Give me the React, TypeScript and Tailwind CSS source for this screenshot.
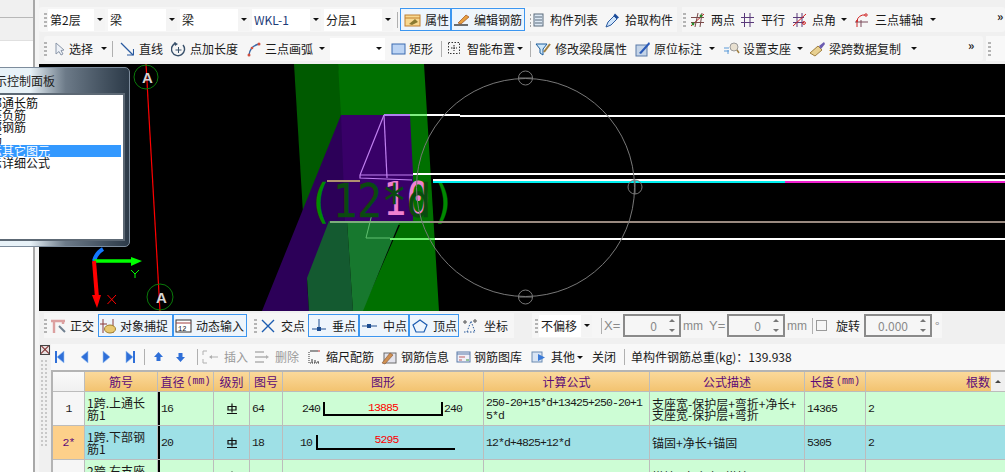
import React from "react";

const Ic = ({ w = 16, children }: { w?: number; children: React.ReactNode }) => (
  <svg width={w} height={16} viewBox={`0 0 ${w} 16`} className="shrink-0" fill="none">
    {children}
  </svg>
);

const Arrow = () => <span className="block w-0 h-0 shrink-0 border-x-[3px] border-x-transparent border-t-[3px] border-t-[#111]" />;

const Grip = ({ cls = "" }: { cls?: string }) => (
  <span className={`flex flex-col gap-[2px] w-[3px] shrink-0 ${cls}`}>
    {[0, 1, 2, 3].map((i) => (
      <span key={i} className="w-[3px] h-[2px] bg-[#b4b4b4]" />
    ))}
  </span>
);

const Sep = ({ cls = "" }: { cls?: string }) => <span className={`w-px h-[16px] bg-[#b0b0b0] shrink-0 ${cls}`} />;

const Combo = ({ text, cls }: { text: string; cls: string }) => (
  <span className={`h-[22px] bg-white flex items-center justify-between shrink-0 pl-[2px] ${cls}`}>
    <span className={text === "WKL-1" ? "text-[#1c3c78]" : ""}>{text}</span>
    <span className="w-[11px] h-full bg-[#f4f4f4] flex items-center justify-center"><Arrow /></span>
  </span>
);

const Tool = ({
  icon,
  label,
  cls,
  active,
  arrow,
  dim,
  lm = "ml-[3px]",
}: {
  icon?: React.ReactNode;
  label: string;
  cls: string;
  active?: boolean;
  arrow?: boolean;
  dim?: boolean;
  lm?: string;
}) => (
  <span
    className={`flex items-center h-[23px] shrink-0 whitespace-nowrap ${cls} ${
      active ? "border border-[#3c96f0] bg-[#eef5fc]" : ""
    } ${dim ? "text-[#9a9a9a]" : ""}`}
  >
    {icon}
    <span className={lm}>{label}</span>
    {arrow && <span className="ml-auto flex items-center"><Arrow /></span>}
  </span>
);

const Spin = ({ value, cls }: { value: string; cls: string }) => (
  <span className={`h-[23px] border-2 border-[#8a8a8a] bg-[#f6f6f6] flex items-center justify-end shrink-0 text-[#8a8a8a] ${cls}`}>
    <span>{value}</span>
    <span className="w-[14px] h-full flex flex-col items-center justify-center gap-[7px] ml-[8px]">
      <span className="block w-0 h-0 border-x-[3px] border-x-transparent border-b-[3px] border-b-[#777]" />
      <span className="block w-0 h-0 border-x-[3px] border-x-transparent border-t-[3px] border-t-[#777]" />
    </span>
  </span>
);

const NavTri = ({ dir, bar }: { dir: "l" | "r"; bar?: boolean }) => (
  <Ic w={12}>
    {dir === "l" ? (
      <path d="M10 2 L10 14 L3 8 Z" fill="#2f6fd8" stroke="#9cc4f4" strokeWidth="0.6" />
    ) : (
      <path d="M2 2 L2 14 L9 8 Z" fill="#2f6fd8" stroke="#9cc4f4" strokeWidth="0.6" />
    )}
    {bar && <rect x={dir === "l" ? 1 : 9} y="2" width="2" height="12" fill="#2f6fd8" />}
  </Ic>
);

const Canvas = () => (
  <svg viewBox="39 64 966 247" width={966} height={247} className="block shrink-0 bg-black">
    <polygon points="294,64 338,64 345,115 303,213" fill="#005a00" />
    <polygon points="338,64 424,64 439,311 362,311 400,225 345,221 341,115" fill="#007000" />
    <polygon points="341,115 356,115 345,221 307,281 309,311 262,311" fill="#2c0058" />
    <polygon points="341,115 410,115 413,173 413,221 345,221" fill="#380068" />
    <polygon points="329,221 307,278 309,311 353,311 347,221" fill="#145a30" />
    <polygon points="347,221 353,311 363,311 400,221" fill="#17782e" />
    <polygon points="413,173 430,173 433,221 413,221" fill="#007000" />
    <g stroke="#c080f0" strokeWidth="1.2" fill="none">
      <path d="M384 115 L360 175 L360 178 L412 180" />
      <path d="M384 115 L387 178" />
      <path d="M360 175 H413" />
    </g>
    <path d="M372 214 L366 238 L390 238" stroke="#60c070" strokeWidth="1" fill="none" />
    <text x="383" y="215" fontFamily="'DejaVu Sans Mono', monospace" fontSize="46" textLength="47" lengthAdjust="spacingAndGlyphs" fill="#f080d0">10</text>
    <text x="308" y="217" fontFamily="'DejaVu Sans Mono', monospace" fontSize="46" textLength="148" lengthAdjust="spacingAndGlyphs" fill="#0a4a10" stroke="#0a4a10" strokeWidth="0.3">
      <tspan fill="#008a00" stroke="#008a00">(</tspan>12*d<tspan fill="#008a00" stroke="#008a00">)</tspan>
    </text>
    <g strokeWidth="2" shapeRendering="crispEdges">
      <path d="M384 115 H410" stroke="#b080f0" />
      <path d="M410 115 H427" stroke="#80f080" />
      <path d="M427 115 H460" stroke="#fff" />
      <path d="M460 116 H1005" stroke="#fff" />
      <path d="M413 174 H1005" stroke="#fff" />
      <path d="M433 180 H1005" stroke="#fff" />
      <path d="M433 182 H785" stroke="#00f0f0" />
      <path d="M785 182 H1005" stroke="#f020d0" />
      <path d="M327 181 H360" stroke="#b09070" />
      <path d="M330 222 H430" stroke="#7cae7c" />
      <path d="M430 222 H1005" stroke="#9a8a80" />
      <path d="M390 239 H435" stroke="#70f070" />
      <path d="M435 239 H1005" stroke="#fff" />
    </g>
    <g stroke="#787878" strokeWidth="1" fill="none">
      <circle cx="525.5" cy="187.5" r="109" />
      <circle cx="525.5" cy="78" r="7" />
      <path d="M518.5 78 H532.5" />
      <circle cx="635" cy="187" r="7" />
      <path d="M635 180 V194" />
      <circle cx="525.5" cy="297" r="7" />
      <path d="M518.5 297 H532.5" />
    </g>
    <path d="M146 64 L160 311" stroke="#ff0000" strokeWidth="1.2" />
    <circle cx="146" cy="77" r="12" stroke="#0a7a0a" strokeWidth="1" fill="none" />
    <circle cx="160" cy="297" r="13" stroke="#0a7a0a" strokeWidth="1" fill="none" />
    <text x="147.5" y="83" textAnchor="middle" fontFamily="'Liberation Sans', sans-serif" fontWeight="700" fontSize="15" fill="#d4d4d4">A</text>
    <text x="161.5" y="303" textAnchor="middle" fontFamily="'Liberation Sans', sans-serif" fontWeight="700" fontSize="15" fill="#d4d4d4">A</text>
    <path d="M94 261 Q96 253 103 249" stroke="#1478ff" strokeWidth="4" fill="none" />
    <path d="M94 261 H134" stroke="#00ff00" strokeWidth="3.4" />
    <polygon points="131,257 142,261 131,266" fill="#00ff00" />
    <path d="M94 261 L97 298" stroke="#ff0000" strokeWidth="4" />
    <polygon points="92,295 101,295 97,308" fill="#ff0000" />
    <path d="M131 270 L135 274 L139 270 M135 274 V278" stroke="#00ff00" strokeWidth="1" fill="none" />
    <path d="M107.5 295 L116 304 M116 295 L107.5 304" stroke="#ff0000" strokeWidth="1" />
  </svg>
);

const Head = ({ t, mm }: { t: string; mm?: boolean }) => (
  <>
    {t}
    {mm && <span className="font-['Liberation_Mono',monospace] text-[10px] ml-[2px]">(mm)</span>}
  </>
);

const headers: [string, string, boolean][] = [
  ["筋号", "w-[73px]", false],
  ["直径", "w-[56px]", true],
  ["级别", "w-[36px]", false],
  ["图号", "w-[33px]", false],
  ["图形", "w-[201px]", false],
  ["计算公式", "w-[166px]", false],
  ["公式描述", "w-[155px]", false],
  ["长度", "w-[61px]", true],
];

const mono = "font-['Liberation_Mono',monospace] text-[11.5px] tracking-[-0.9px]";
const cell = "shrink-0 h-full border-r border-[#bcbcbc] flex items-center overflow-hidden";

const Steel = () => (
  <svg width={12} height={12} viewBox="0 0 12 12" className="mx-auto" fill="none">
    <path d="M2 7 V3.5 H10 V7 Z M6 0.5 V9.5 M1 10.5 H11" stroke="#111" strokeWidth="1.2" />
  </svg>
);

const Row = ({
  bg,
  head,
  headBg,
  name,
  d,
  no,
  shape,
  f,
  desc,
  len,
  n,
}: {
  bg: string;
  head: string;
  headBg: string;
  name: React.ReactNode;
  d: string;
  no: string;
  shape: React.ReactNode;
  f: string;
  desc: React.ReactNode;
  len: string;
  n: string;
}) => (
  <div className={`flex shrink-0 border-b border-[#bcbcbc] h-[34px] ${bg}`}>
    <div className={`${cell} w-[32px] justify-center ${headBg} ${mono}`}>{head}</div>
    <div className={`${cell} w-[73px] pl-[2px] leading-[12px]`}><span>{name}</span></div>
    <div className={`${cell} w-[56px] border-l-2 border-l-black pl-[1px] ${mono}`}>{d}</div>
    <div className={`${cell} w-[36px]`}><Steel /></div>
    <div className={`${cell} w-[33px] pl-[2px] ${mono}`}>{no}</div>
    <div className={`${cell} w-[201px]`}>{shape}</div>
    <div className={`${cell} w-[166px] pl-[2px] pr-[5px] leading-[13px] break-all ${mono}`}><span>{f}</span></div>
    <div className={`${cell} w-[155px] pl-[2px] leading-[11px] whitespace-nowrap`}><span>{desc}</span></div>
    <div className={`${cell} w-[61px] pl-[2px] ${mono}`}>{len}</div>
    <div className={`shrink-0 h-full w-[125px] flex items-center pl-[2px] ${mono}`}>{n}</div>
  </div>
);

export default function App() {
  return (
    <div className="relative w-[1005px] h-[472px] overflow-hidden flex bg-[#f0f0f0] text-[12px] text-[#1a1a1a] font-['Noto_Sans_CJK_SC','Liberation_Sans',sans-serif] leading-none">
      {/* left strip */}
      <div className="w-[33px] h-full shrink-0 flex flex-col">
        <div className="h-[18px] bg-[#f0f0f0] border-b border-[#b8b8b8]" />
        <div className="h-[23px] bg-[#f0f0f0] border-b border-[#e0e0e0]" />
        <div className="flex-1 bg-white" />
      </div>
      <div className="w-[2px] h-full bg-[#a8a8a8] shrink-0" />
      <div className="w-[4px] h-full bg-[#f4f4f4] shrink-0" />

      {/* main */}
      <div className="w-[966px] h-full shrink-0 flex flex-col">
        <div className="h-[7px] shrink-0" />

        {/* row 1 */}
        <div className="h-[25px] flex items-center shrink-0 bg-[#f6f6f6] pl-[5px] rounded-[3px]">
          <Grip />
          <Combo text="第2层" cls="w-[57px] ml-[1px]" />
          <Combo text="梁" cls="w-[69px] ml-[3px]" />
          <Combo text="梁" cls="w-[69px] ml-[3px]" />
          <Combo text="WKL-1" cls="w-[69px] ml-[3px]" />
          <Combo text="分层1" cls="w-[69px] ml-[3px]" />
          <Sep cls="ml-[4px]" />
          <Tool active cls="w-[51px] ml-[2px] pl-[3px]" label="属性" icon={
            <Ic w={18}><rect x="1" y="3" width="15" height="11" fill="#f8d890" stroke="#c08030" /><path d="M1 6 H16" stroke="#c08030" /><path d="M5 12 L11 7 L14 10 L8 13 Z" fill="#8a7a30" /></Ic>
          } />
          <Tool active cls="w-[74px] pl-[1px]" label="编辑钢筋" icon={
            <Ic w={18}><path d="M1 13 H15" stroke="#333" strokeWidth="1.4" /><path d="M5 11 L13 3 L16 5 L8 12 Z" fill="#e8a040" stroke="#a05020" strokeWidth="0.7" /></Ic>
          } />
          <Tool cls="w-[70px] ml-[4px]" lm="ml-[6px]" label="构件列表" icon={
            <Ic w={15}><path d="M1 3 H3 M1 7 H3 M1 11 H3 M1 14 H3" stroke="#555" strokeDasharray="1 1" /><rect x="5" y="2" width="9" height="12" fill="#dce8f4" stroke="#5a6a7a" /><path d="M6 5 H13 M6 8 H13 M6 11 H13" stroke="#5a6a7a" /></Ic>
          } />
          <Tool cls="w-[69px] ml-[6px]" lm="ml-[5px]" label="拾取构件" icon={
            <Ic w={15}><path d="M1 15 L3 10 L9 4 L12 7 L6 13 Z" fill="#cfe4fa" stroke="#2a5aa0" /><path d="M10 1.5 L14 5.5 L12 7 L8.5 3.5 Z" fill="#1c4c9a" /></Ic>
          } />
          <span className="w-[5px] self-stretch bg-[#f0f0f0] ml-[3px] shrink-0" />
          <Grip cls="ml-[1px]" />
          <Tool cls="w-[43px] ml-[4px]" lm="ml-[6px]" label="两点" icon={
            <Ic w={15}><path d="M1 14 L14 2" stroke="#c02020" /><path d="M1 5.5 H14 M1 10.5 H14 M5 15 L8 1 M10 15 L12 1" stroke="#7a4a4a" /><circle cx="3" cy="12" r="1.4" fill="#2a8a2a" /><circle cx="11" cy="4" r="1.4" fill="#2a8a2a" /></Ic>
          } />
          <Tool cls="w-[45px] ml-[7px]" lm="ml-[6px]" label="平行" icon={
            <Ic w={15}><path d="M1 5.5 H14 M1 10.5 H14 M4.5 1 V15 M10 1 V15" stroke="#5a3a7a" /></Ic>
          } />
          <Tool cls="w-[55px] ml-[7px]" lm="ml-[5px]" arrow label="点角" icon={
            <Ic w={15}><path d="M1 5.5 H12 M1 10.5 H12 M5 1 V15 M10 1 V15" stroke="#5a3a7a" /><path d="M1 14 L14 2" stroke="#d02020" /><circle cx="12" cy="11" r="1.4" stroke="#d02020" /></Ic>
          } />
          <Tool cls="w-[82px] ml-[7px]" lm="ml-[6px]" arrow label="三点辅轴" icon={
            <Ic w={15}><path d="M3 15 V9 A7 7 0 0 1 11 3" stroke="#d02020" /><path d="M1 10 H14 M7 8 V15" stroke="#7a4a5a" /><circle cx="3" cy="9" r="1" fill="#d02020" /><circle cx="12" cy="3" r="1.2" stroke="#d02020" /></Ic>
          } />
          <span className="ml-[61px] text-[12px] font-bold leading-none mb-[8px]">»</span>
        </div>

        <div className="h-[4px] shrink-0" />

        {/* row 2 */}
        <div className="h-[25px] flex items-center shrink-0 pl-[5px]">
          <div className="h-full w-[939px] flex items-center bg-[#f6f6f6] rounded-[3px] shrink-0">
            <Grip />
            <Tool cls="w-[54px] ml-[6px]" arrow label="选择" icon={
              <Ic w={13}><path d="M3 2 L3 13 L6 10.5 L8 14 L10 13 L8 9.5 L11 9 Z" fill="#eef2f8" stroke="#8a96a8" /></Ic>
            } />
            <Sep cls="ml-[5px]" />
            <Tool cls="w-[43px] ml-[7px]" lm="ml-[5px]" label="直线" icon={
              <Ic w={14}><path d="M1 2 L13 14" stroke="#2a5aa0" strokeWidth="1.3" /><path d="M7 14 H13.5 V8" stroke="#2a5aa0" strokeWidth="1.1" /></Ic>
            } />
            <Tool cls="w-[67px] ml-[8px]" lm="ml-[4px]" label="点加长度" icon={
              <Ic w={15}><path d="M5 2 A6.5 6.5 0 1 0 12 4" stroke="#38506a" strokeWidth="1.4" /><path d="M7.5 6 V12 M4.5 9 H10.5" stroke="#38506a" /><path d="M3 1 L7 3 L4 5 Z" fill="#38506a" /></Ic>
            } />
            <Tool cls="w-[78px] ml-[9px]" arrow label="三点画弧" icon={
              <Ic w={15}><path d="M2 14 Q3 5 12 3" stroke="#3a6aa8" strokeWidth="1.4" /><circle cx="2" cy="14" r="1.5" fill="#d05040" /><circle cx="5" cy="7" r="1.3" fill="#d05040" /><circle cx="12" cy="3" r="1.5" fill="#d05040" /></Ic>
            } />
            <span className="w-[55px] h-[22px] bg-white ml-[5px] flex items-center justify-end pr-[3px] shrink-0"><Arrow /></span>
            <Tool cls="w-[44px] ml-[6px]" label="矩形" icon={
              <Ic w={15}><rect x="1" y="3" width="13" height="10" fill="#bcd4f4" stroke="#3a6ab0" /></Ic>
            } />
            <Sep cls="ml-[6px]" />
            <Tool cls="w-[76px] ml-[5px]" lm="ml-[6px]" label="智能布置" icon={
              <Ic w={14}><rect x="1.5" y="1.5" width="11" height="11" stroke="#333" strokeDasharray="1.5 1.5" /><path d="M7 4 V10 M4 7 H10" stroke="#222" strokeDasharray="1.5 1" /></Ic>
            } arrow />
            <Sep cls="ml-[7px]" />
            <Tool cls="w-[93px] ml-[4px]" label="修改梁段属性" icon={
              <Ic w={17}><path d="M1 3 H12 L8 8 V14 L5 12 V8 Z" fill="#cfe8fa" stroke="#1c5c9a" /><path d="M9 11 L15 3" stroke="#a08040" strokeWidth="2" /></Ic>
            } />
            <Tool cls="w-[80px] ml-[7px]" arrow label="原位标注" icon={
              <Ic w={16}><rect x="1" y="4" width="11" height="11" fill="#c4d4e8" stroke="#5a7aa8" /><path d="M4 12 L14 1 L15 3 L6 13 Z" fill="#2a5ab8" /></Ic>
            } />
            <Tool cls="w-[80px] ml-[8px]" arrow label="设置支座" icon={
              <Ic w={17}><path d="M1 7 H6 M1 10 H6 M5 13 V9" stroke="#5a9ad8" /><circle cx="11" cy="6" r="4" fill="#e8e0d0" stroke="#9a9a9a" /><path d="M14 9 L16 12" stroke="#a08040" strokeWidth="1.5" /></Ic>
            } />
            <Tool cls="w-[108px] ml-[6px]" arrow label="梁跨数据复制" icon={
              <Ic w={17}><path d="M1 12 L9 5 L13 9 L6 15 Z" fill="#e8d090" stroke="#a08040" /><path d="M10 5 L15 1 L16 3 L12 8 Z" fill="#6a5ab0" /></Ic>
            } />
            <span className="ml-[51px] font-bold mb-[8px]">»</span>
          </div>
          <span className="w-[24px] h-full bg-[#f8f8f8] ml-[3px] shrink-0 pl-[2px] flex items-center"><Grip /></span>
        </div>

        <div className="h-[3px] shrink-0" />
        <Canvas />
        <div className="h-[2px] shrink-0" />

        {/* row 3 */}
        <div className="h-[25px] flex items-center shrink-0 pl-[5px]">
          <div className="h-full w-[470px] bg-[#f6f6f6] flex items-center shrink-0">
            <Grip />
            <Tool cls="w-[45px] ml-[3px]" label="正交" icon={
              <Ic w={17}><path d="M1 3 H15 M4 3 V15 M13 3 V6" stroke="#dca0a0" strokeWidth="2.4" /><path d="M9 8 L15 14" stroke="#708090" strokeWidth="2" /></Ic>
            } />
            <Tool active cls="w-[75px] ml-[3px]" label="对象捕捉" icon={
              <Ic w={18}><path d="M4 1 V15 M14 1 V15 M1 6 H8" stroke="#8a3a3a" /><ellipse cx="11" cy="11" rx="5.5" ry="4" fill="#e8c870" stroke="#a08030" /></Ic>
            } />
            <Tool active cls="w-[74px] pl-[1px]" label="动态输入" icon={
              <Ic w={18}><rect x="1" y="2" width="15" height="12" fill="#fff" stroke="#333" /><path d="M1 5 H16" stroke="#a04040" /><text x="3" y="13" fontSize="7" fontFamily="'Liberation Mono', monospace" fill="#111">12</text></Ic>
            } />
            <Grip cls="ml-[7px]" />
            <Tool cls="w-[46px] ml-[3px]" lm="ml-[5px]" label="交点" icon={
              <Ic w={16}><path d="M2 2 L14 14 M14 2 L2 14" stroke="#1c5cb0" strokeWidth="1.4" /></Ic>
            } />
            <Tool active cls="w-[51px] ml-[2px] pl-[2px]" lm="ml-[5px]" label="垂点" icon={
              <Ic w={16}><path d="M1 11 H15 M8 1 V11" stroke="#1c4c90" /><rect x="6" y="9" width="4" height="4" fill="#1c4c90" /></Ic>
            } />
            <Tool active cls="w-[50px] pl-[1px]" lm="ml-[5px]" label="中点" icon={
              <Ic w={17}><path d="M1 8 H16" stroke="#1c4c90" /><rect x="6" y="6" width="4" height="4" fill="#1c4c90" /></Ic>
            } />
            <Tool active cls="w-[50px] pl-[2px]" lm="ml-[5px]" label="顶点" icon={
              <Ic w={16}><path d="M8 2 L15 7 L12 14 H4 L1 7 Z" fill="#eef5fc" stroke="#1c5cb0" strokeWidth="1.2" /></Ic>
            } />
            <Tool cls="w-[46px] ml-[3px]" lm="ml-[6px]" label="坐标" icon={
              <Ic w={16}><path d="M2 14 H14 M5 14 L9 3 L13 14" stroke="#2a5a9a" strokeDasharray="1.5 1.5" /><circle cx="3" cy="4" r="1.2" stroke="#444" /><circle cx="13" cy="3" r="1.2" stroke="#444" /></Ic>
            } />
          </div>
          <div className="h-full w-[18px] shrink-0" />
          <div className="h-full w-[410px] bg-[#f6f6f6] flex items-center shrink-0">
            <Grip cls="ml-[3px]" />
            <Combo text="不偏移" cls="w-[53px] ml-[1px]" />
            <Sep cls="ml-[9px]" />
            <span className="ml-[2px] w-[16px] text-[#8a8a8a] font-['Liberation_Sans',sans-serif] text-[13px]">X=</span>
            <Spin value="0" cls="w-[58px] ml-[3px]" />
            <span className="ml-[2px] w-[21px] text-[#8a8a8a] font-['Liberation_Sans',sans-serif] text-[12px]">mm</span>
            <span className="ml-[5px] w-[15px] text-[#8a8a8a] font-['Liberation_Sans',sans-serif] text-[13px]">Y=</span>
            <Spin value="0" cls="w-[58px] ml-[3px]" />
            <span className="ml-[2px] w-[21px] text-[#8a8a8a] font-['Liberation_Sans',sans-serif] text-[12px]">mm</span>
            <Sep cls="ml-[4px]" />
            <span className="w-[11px] h-[11px] border border-[#9a9a9a] ml-[3px] shrink-0" />
            <span className="ml-[9px] w-[28px] shrink-0">旋转</span>
            <Spin value="0.000" cls="w-[68px]" />
            <span className="ml-[3px] text-[#8a8a8a]">°</span>
          </div>
        </div>

        <div className="h-[6px] shrink-0" />

        {/* row 4 + table */}
        <div className="flex-1 min-h-0 flex">
          <div className="w-[12px] shrink-0 flex flex-col items-center pt-[1px] gap-[3px]">
            <span className="w-[10px] h-[10px] border border-[#444] bg-[#e8e0e0] shrink-0 relative overflow-hidden">
              <span className="absolute left-[-2px] top-[3px] w-[12px] h-px bg-[#803030] rotate-45" />
              <span className="absolute left-[-2px] top-[3px] w-[12px] h-px bg-[#803030] -rotate-45" />
            </span>
            <div className="w-[8px] flex-1 grid grid-cols-2 gap-y-[2px] content-start mt-[2px]">
              {Array.from({ length: 44 }).map((_, i) => (
                <span key={i} className="w-[2px] h-[2px] bg-[#c8c8c8]" />
              ))}
            </div>
          </div>
          <div className="flex-1 min-w-0 flex flex-col">
            <div className="h-[26px] flex items-center shrink-0 bg-[#f8f8f8]">
              <span className="ml-[3px]"><NavTri dir="l" bar /></span>
              <span className="ml-[12px]"><NavTri dir="l" /></span>
              <span className="ml-[11px]"><NavTri dir="r" /></span>
              <span className="ml-[11px]"><NavTri dir="r" bar /></span>
              <Sep cls="ml-[8px]" />
              <span className="ml-[8px]"><Ic w={11}><path d="M5.5 3 L10 8 H7.5 V12 H3.5 V8 H1 Z" fill="#2f6fd8" /></Ic></span>
              <span className="ml-[11px]"><Ic w={11}><path d="M5.5 13 L10 8 H7.5 V4 H3.5 V8 H1 Z" fill="#2f6fd8" /></Ic></span>
              <Sep cls="ml-[11px]" />
              <Tool dim cls="w-[45px] ml-[4px]" lm="ml-[4px]" label="插入" icon={
                <Ic w={18}><path d="M5 2 H1 V6 M1 10 V14 H5 M8 8 H16" stroke="#b0b0b0" /><path d="M7 8 L10 6 V10 Z" fill="#b0b0b0" /></Ic>
              } />
              <Tool dim cls="w-[45px] ml-[7px]" label="删除" icon={
                <Ic w={18}><path d="M1 3 H10 M1 8 H12 M1 13 H10" stroke="#b0b0b0" strokeWidth="1.5" /><path d="M12 6 L15 8 L12 10 Z" fill="#b0b0b0" /></Ic>
              } />
              <Tool cls="w-[66px] ml-[9px]" label="缩尺配筋" icon={
                <Ic w={15}><path d="M1 3 V14 H12" stroke="#333" strokeDasharray="1 1" /><path d="M4 14 V10 M7 14 V11 M10 14 V12 M2 2 H10" stroke="#333" /><path d="M10 2 L12 2" stroke="#c03030" /></Ic>
              } />
              <Tool cls="w-[68px] ml-[7px]" label="钢筋信息" icon={
                <Ic w={17}><rect x="3" y="4" width="12" height="10" fill="#e4e4ec" stroke="#6a6a6a" /><path d="M1 14 L9 4 L12 6 L4 15 Z" fill="#d09050" stroke="#805030" strokeWidth="0.6" /></Ic>
              } />
              <Tool cls="w-[67px] ml-[7px]" label="钢筋图库" icon={
                <Ic w={15}><rect x="1" y="3" width="13" height="10" fill="#f0f0f8" stroke="#5a7aa8" /><path d="M1 5 H14" stroke="#5a7aa8" /><path d="M3 8 H9 M3 11 H6" stroke="#c06060" /><path d="M10 11 H13" stroke="#3a9a3a" /></Ic>
              } />
              <Tool cls="w-[52px] ml-[8px]" lm="ml-[5px]" arrow label="其他" icon={
                <Ic w={15}><rect x="1" y="3" width="10" height="10" fill="#d8e4f4" stroke="#6a8ab0" /><path d="M7 5 L14 8.5 L7 12 Z" fill="#3a7ad8" /></Ic>
              } />
              <span className="ml-[9px] w-[24px] shrink-0">关闭</span>
              <Sep cls="ml-[8px]" />
              <span className="ml-[6px] whitespace-nowrap">单构件钢筋总重(kg)：139.938</span>
            </div>

            <div className="flex-1 min-h-0 flex flex-col border-t-2 border-[#b4b4b4] border-l-2 overflow-hidden bg-white">
              <div className="flex h-[20px] shrink-0 border-b border-[#bcbcbc] bg-white">
                <div className="w-[32px] shrink-0 h-full border-r border-[#bcbcbc] bg-gradient-to-b from-[#fafafa] to-[#f0f0f0]" />
                {headers.map(([h, w, mm]) => (
                  <div key={h} className={`${w} shrink-0 h-full border-r border-[#bcbcbc] bg-gradient-to-b from-[#fbd99a] to-[#f2c370] flex items-center justify-center whitespace-nowrap text-[#5c0a78]`}>
                    <Head t={h} mm={mm} />
                  </div>
                ))}
                <div className="w-[125px] shrink-0 h-full bg-gradient-to-b from-[#fbd99a] to-[#f2c370] flex items-center justify-end text-[#5c0a78] pr-[1px]">根数</div>
                <div className="w-[14px] shrink-0 h-full bg-[#f0f0f0] flex items-center justify-center">
                  <span className="block w-0 h-0 border-x-[3px] border-x-transparent border-b-[3px] border-b-[#444]" />
                </div>
              </div>
              <Row
                bg="bg-[#cdfdd5]"
                head="1"
                headBg="bg-[#f6f6f6]"
                name={<>1跨.上通长<br />筋1</>}
                d="16"
                no="64"
                f="250-20+15*d+13425+250-20+15*d"
                desc={<>支座宽-保护层+弯折+净长+<br />支座宽-保护层+弯折</>}
                len="14365"
                n="2"
                shape={
                  <div className="flex items-center w-full pl-[19px]">
                    <span className={`${mono} w-[18px] shrink-0`}>240</span>
                    <div className={`w-[120px] h-[14px] ml-[3px] border-x-2 border-b-2 border-black text-center text-[#ff0000] shrink-0 leading-[11px] ${mono}`}>13885</div>
                    <span className={`${mono} ml-[1px]`}>240</span>
                  </div>
                }
              />
              <Row
                bg="bg-[#9ee0e6]"
                head="2*"
                headBg="bg-[#fdd08a] text-[#5c0a78]"
                name={<>1跨.下部钢<br />筋1</>}
                d="20"
                no="18"
                f="12*d+4825+12*d"
                desc="锚固+净长+锚固"
                len="5305"
                n="2"
                shape={
                  <div className="flex items-center w-full pl-[17px]">
                    <span className={`${mono} w-[12px] shrink-0`}>10</span>
                    <div className={`w-[139px] h-[15px] ml-[4px] border-l-2 border-b-2 border-black text-center text-[#ff0000] shrink-0 leading-[10px] ${mono}`}>5295</div>
                  </div>
                }
              />
              <Row
                bg="bg-[#cdfdd5]"
                head="3"
                headBg="bg-[#f6f6f6]"
                name={<>2跨.右支座<br />筋1</>}
                d="14"
                no="1"
                f="4850/3+4850+4850/3"
                desc="搭接+支座宽+搭接"
                len="8050"
                n="1"
                shape={
                  <div className={`w-full text-center text-[#ff0000] ${mono}`}>8050</div>
                }
              />
            </div>
          </div>
        </div>
      </div>

      {/* floating panel */}
      <div className="absolute left-[-70px] top-[67px] w-[200px] h-[180px] rounded-[5px] border border-[#7d8c9c] bg-gradient-to-r from-[#e8f2f8] from-[50%] via-[#6c7a88] via-[68%] to-[#2c3a48] flex flex-col pl-[5px] pr-[4px] pb-[5px]">
        <div className="h-[25px] flex items-center pl-[47px] text-[12px] text-[#222] shrink-0">显示控制面板</div>
        <div className="flex-1 min-h-0 border-2 border-[#5c6874] bg-white pt-[2px] pl-[40px] pr-[2px] leading-[12px] text-[12px] text-[#111]">
          <div>上部通长筋</div>
          <div>支座负筋</div>
          <div>下部钢筋</div>
          <div>箍筋</div>
          <div className="bg-[#3399ff] text-white -ml-[40px] pl-[40px]">显示其它图元</div>
          <div>显示详细公式</div>
        </div>
      </div>
    </div>
  );
}
